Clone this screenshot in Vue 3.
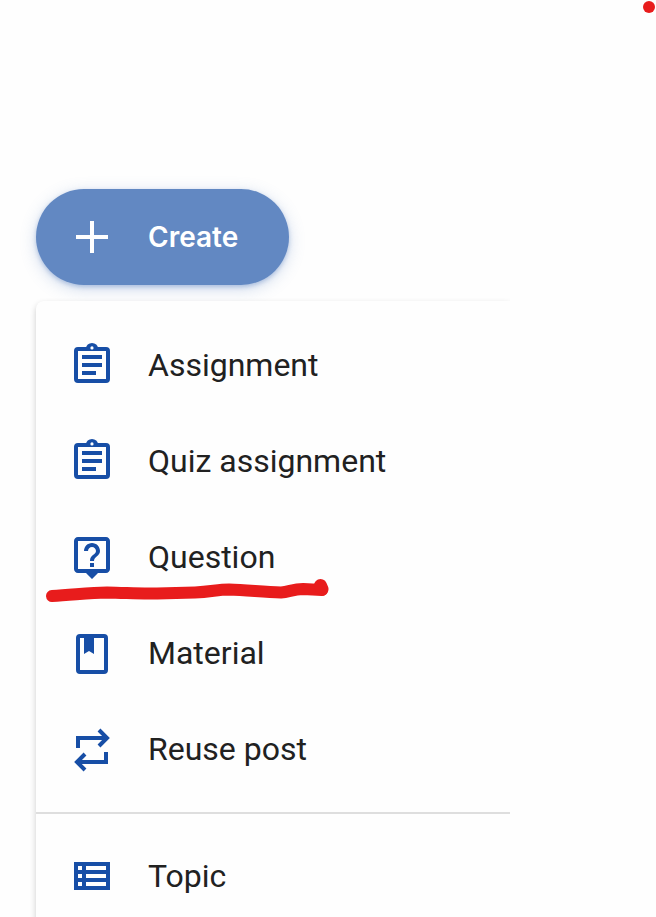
<script setup>
const createItems = [
  { id: 'assignment', label: 'Assignment', icon: 'clipboard' },
  { id: 'quiz', label: 'Quiz assignment', icon: 'clipboard' },
  { id: 'question', label: 'Question', icon: 'question', marked: true },
  { id: 'material', label: 'Material', icon: 'book' },
  { id: 'reuse', label: 'Reuse post', icon: 'repeat' },
]
const topicItems = [{ id: 'topic', label: 'Topic', icon: 'list' }]
const groups = [createItems, topicItems]
</script>

<template>
  <main class="page">
    <svg class="dot" viewBox="0 0 12 12" aria-hidden="true">
      <circle cx="6" cy="6" r="6" />
    </svg>

    <button class="create" type="button">
      <svg class="icon" viewBox="0 0 48 48" aria-hidden="true">
        <path d="M8 24h32M24 8v32" fill="none" stroke="currentColor" stroke-width="4" />
      </svg>
      <span>Create</span>
    </button>

    <nav class="menu">
      <ul v-for="(group, index) in groups" :key="index" class="group">
        <li v-for="item in group" :key="item.id" class="entry">
          <button class="item" type="button">
            <svg v-if="item.icon === 'clipboard'" class="icon" viewBox="0 0 48 48" aria-hidden="true">
              <rect x="8" y="8" width="32" height="32" rx="2" fill="none" stroke="currentColor" stroke-width="4" />
              <path d="M18 7.500a6 5.500 0 0 1 12 0V9H18z" fill="currentColor" />
              <path d="M14 16h20M14 24h20M14 32h14" fill="none" stroke="currentColor" stroke-width="4" />
              <circle cx="24" cy="6.900" r="1.600" fill="#fff" />
            </svg>
            <svg v-else-if="item.icon === 'question'" class="icon" viewBox="0 0 24 24" aria-hidden="true">
              <path
                fill="currentColor"
                d="M19 2H5c-1.110 0-2 .9-2 2v14c0 1.100.890 2 2 2h4l3 3 3-3h4c1.100 0 2-.9 2-2V4c0-1.100-.9-2-2-2zm0 16H5V4h14v14zm-8-3h2v2h-2zm1-8c1.100 0 2 .9 2 2 0 2-3 1.750-3 5h2c0-2.250 3-2.500 3-5 0-2.210-1.790-4-4-4s-4 1.790-4 4h2c0-1.100.9-2 2-2z"
              />
            </svg>
            <svg v-else-if="item.icon === 'book'" class="icon" viewBox="0 0 48 48" aria-hidden="true">
              <rect x="10" y="7" width="28" height="36" rx="2" fill="none" stroke="currentColor" stroke-width="4" />
              <path d="M16 8h10v17l-5-3-5 3z" fill="currentColor" />
            </svg>
            <svg v-else-if="item.icon === 'repeat'" class="icon" viewBox="0 0 48 48" aria-hidden="true">
              <g fill="none" stroke="currentColor" stroke-width="4">
                <path d="M10 23V13h29M31 5l8 8-8 8" />
                <path d="M38 27v10H9M17 29l-8 8 8 8" />
              </g>
            </svg>
            <svg v-else class="icon" viewBox="0 0 48 48" aria-hidden="true">
              <path
                fill="currentColor"
                fill-rule="evenodd"
                d="M6 10h36v28H6zM10 14v4h4v-4zM18 14v4h20v-4zM10 22v4h4v-4zM18 22v4h20v-4zM10 30v4h4v-4zM18 30v4h20v-4z"
              />
            </svg>
            <span>{{ item.label }}</span>
          </button>
          <svg v-if="item.marked" class="underline" viewBox="0 0 284 24" aria-hidden="true">
            <g fill="none" stroke="currentColor" stroke-width="12" stroke-linecap="round" stroke-linejoin="round">
              <path d="M7 18C28 17 44 14.500 62 14.500C84 15 96 16 112 15.500L150 14.500C166 14 172 11.500 184 11.500C202 12 218 14 236 14.500C244 14 248 11 258 11L277 12" />
              <path d="M275.500 7.500L277 11" stroke-width="13" />
            </g>
          </svg>
        </li>
      </ul>
    </nav>
  </main>
</template>

<style>
body {
  margin: 0;
  background: #fefefe;
}
</style>

<style scoped>
.page {
  box-sizing: border-box;
  position: relative;
  height: 100vh;
  overflow: hidden;
  padding: 189px 146px 0 36px;
  font-family: Roboto, "Liberation Sans", sans-serif;
}

.dot {
  position: absolute;
  top: 1px;
  right: 1px;
  width: 12px;
  height: 12px;
  fill: #e81c1c;
}

.icon {
  flex: none;
  width: 48px;
  height: 48px;
}

.create {
  display: flex;
  align-items: center;
  gap: 32px;
  height: 96px;
  padding: 0 51px 0 32px;
  border: 0;
  border-radius: 48px;
  background: #6288c2;
  color: #fff;
  font-family: Inter, "Liberation Sans", sans-serif;
  font-size: 28px;
  font-weight: 600;
  box-shadow: 0 2px 4px rgba(98, 136, 194, 0.4), 0 4px 16px rgba(98, 136, 194, 0.3);
}

.menu {
  margin-top: 16px;
  border-radius: 8px 0 0 0;
  background: #fefefe;
  box-shadow: 0 3px 6px rgba(0, 0, 0, 0.2);
  clip-path: inset(-8px 0 0 -8px);
}

.group {
  margin: 0;
  padding: 16px 0 15px;
  list-style: none;
}

.group + .group {
  padding-top: 14px;
  border-top: 2px solid #dedede;
}

.entry {
  position: relative;
}

.item {
  display: flex;
  align-items: center;
  gap: 32px;
  width: 100%;
  height: 96px;
  padding: 0 32px;
  border: 0;
  background: transparent;
  color: #212121;
  font-family: inherit;
  font-size: 32px;
  text-align: left;
}

.item .icon {
  color: #174ea6;
}

.underline {
  position: absolute;
  top: 69px;
  left: 9px;
  width: 284px;
  height: 24px;
  color: #e81c1c;
}
</style>
